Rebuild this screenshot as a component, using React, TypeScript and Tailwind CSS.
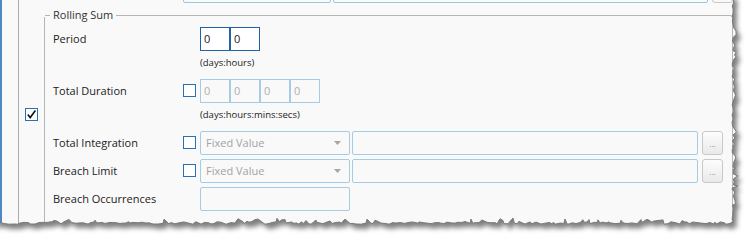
import React from "react";

function mulberry32(a: number) {
  return function () {
    a |= 0;
    a = (a + 0x6d2b79f5) | 0;
    let t = Math.imul(a ^ (a >>> 15), 1 | a);
    t = (t + Math.imul(t ^ (t >>> 7), 61 | t)) ^ t;
    return ((t ^ (t >>> 14)) >>> 0) / 4294967296;
  };
}

function tornPath(): string {
  const r = mulberry32(11);
  const pts: [number, number][] = [];
  pts.push([-6, -6]);
  pts.push([733, -6]);
  for (let y = 0; y <= 221; y += 1 + Math.floor(r() * 4)) {
    let x = 733 + (r() - 0.4) * 2.5;
    if (r() < 0.15) x += 1.5 + r() * 2.5;
    pts.push([x, y]);
  }
  pts.push([734, 222]);
  for (let x = 732; x >= -6; x -= 1 + Math.floor(r() * 5)) {
    let y = 223 + (r() - 0.5) * 2.5;
    if (r() < 0.15) y -= 1.5 + r() * 2.5;
    pts.push([x, y]);
  }
  pts.push([-6, 223]);
  return "M" + pts.map(([x, y]) => `${x.toFixed(1)} ${y.toFixed(1)}`).join(" L") + " Z";
}

const P = tornPath();

function CheckBox({ checked = false }: { checked?: boolean }) {
  return (
    <div className="w-[13px] h-[13px] border border-[#2a70b8] bg-white flex items-center justify-center">
      {checked && (
        <svg width="11" height="11" viewBox="0 0 11 11">
          <path d="M1.8 5.6 L4.2 8.6 L9.4 1.6" fill="none" stroke="#111" strokeWidth="1.6" />
        </svg>
      )}
    </div>
  );
}

function Box({ active = false }: { active?: boolean }) {
  return (
    <div
      className={
        "w-[30px] h-[24px] border flex items-center pl-[3px] pt-[1px] text-[11px] " +
        (active ? "border-[#1f63a6] text-[#1a1a1a] bg-white" : "border-[#a6cbe4] text-[#b0b0b0]")
      }
    >
      0
    </div>
  );
}

function Dropdown() {
  return (
    <div className="w-[150px] h-[24px] border border-[#a6cbe4] rounded-[2px] flex items-center justify-between pl-[5px] pr-[8px] pt-[1px] text-[11px] text-[#a3a3a3]">
      <span>Fixed Value</span>
      <svg width="7" height="4" viewBox="0 0 7 4">
        <path d="M0 0 H7 L3.5 4 Z" fill="#a6a6a6" />
      </svg>
    </div>
  );
}

function DotsButton() {
  return (
    <div className="w-[21px] h-[24px] border border-[#c8c8c8] rounded-[3px] bg-gradient-to-b from-[#fdfdfd] to-[#e9e9e9] flex items-center justify-center text-[8px] text-[#888] leading-none pt-[3px]">
      ...
    </div>
  );
}

function Label({ children }: { children: React.ReactNode }) {
  return <div className="w-[130px] pt-[2px] text-[11px] text-[#222]">{children}</div>;
}

export default function App() {
  return (
    <div className="relative w-[754px] h-[244px] bg-white overflow-hidden font-['Open_Sans',sans-serif]">
      <div className="flex w-[740px] h-[230px] bg-[#f9f9f9]">
        <div className="w-[2px] bg-[#5288c2]" />
        <div className="w-[16px]" />
        <div className="w-px bg-[#ababab]" />
        <div className="w-[25px] pl-[6px] pt-[108px]">
          <CheckBox checked />
        </div>
        <div className="w-px bg-[#b5b5b5] mt-[17px]" />
        <div className="flex flex-col">
          <div className="flex h-[24px] -mt-[21px] -ml-[1px] pl-[139px]">
            <div className="w-[148px] border border-[#9fc5e0] rounded-[2px]" />
            <div className="w-[375px] ml-[2px] border border-[#9fc5e0] rounded-[2px]" />
            <div className="w-[21px] ml-[4px] border border-[#c8c8c8] rounded-[3px]" />
          </div>
          <div className="relative mt-[12px] w-[688px] h-[220px] border-t border-r border-[#b5b5b5] rounded-tr-[3px] pl-[8px]">
            <div className="absolute -top-[9px] left-[5px] px-[3px] bg-[#f9f9f9] text-[11px] leading-[16px] text-[#333]">
              Rolling Sum
            </div>
            <div className="flex flex-col">
              <div className="flex items-center h-[24px] mt-[11px]">
                <Label>Period</Label>
                <div className="w-[17px]" />
                <Box active />
                <Box active />
              </div>
              <div className="h-[18px] mt-[2px] pl-[147px] pt-[4px] flex items-center text-[9.5px] text-[#222]">(days:hours)</div>
              <div className="flex items-center h-[24px] mt-[8px]">
                <Label>Total Duration</Label>
                <div className="w-[17px]">
                  <CheckBox />
                </div>
                <Box />
                <Box />
                <Box />
                <Box />
              </div>
              <div className="h-[18px] mt-[2px] pl-[147px] pt-[4px] flex items-center text-[9.5px] text-[#222]">
                (days:hours:mins:secs)
              </div>
              <div className="flex items-center h-[24px] mt-[8px]">
                <Label>Total Integration</Label>
                <div className="w-[17px]">
                  <CheckBox />
                </div>
                <Dropdown />
                <div className="w-[346px] h-[24px] ml-[2px] border border-[#a6cbe4] rounded-[2px]" />
                <div className="ml-[4px]">
                  <DotsButton />
                </div>
              </div>
              <div className="flex items-center h-[24px] mt-[4px]">
                <Label>Breach Limit</Label>
                <div className="w-[17px]">
                  <CheckBox />
                </div>
                <Dropdown />
                <div className="w-[346px] h-[24px] ml-[2px] border border-[#a6cbe4] rounded-[2px]" />
                <div className="ml-[4px]">
                  <DotsButton />
                </div>
              </div>
              <div className="flex items-center h-[24px] mt-[4px]">
                <Label>Breach Occurrences</Label>
                <div className="w-[17px]" />
                <div className="w-[150px] h-[24px] border border-[#a6cbe4] rounded-[2px]" />
              </div>
            </div>
          </div>
        </div>
      </div>
      <svg className="absolute inset-0" width="754" height="244">
        <defs>
          <filter id="blur" x="-10%" y="-10%" width="120%" height="130%">
            <feGaussianBlur stdDeviation="2.5" />
          </filter>
          <mask id="outside">
            <rect x="0" y="0" width="754" height="244" fill="white" />
            <path d={P} fill="black" />
          </mask>
        </defs>
        <path d={`M-10 -10 H764 V254 H-10 Z ${P}`} fill="#fff" fillRule="evenodd" />
        <g mask="url(#outside)">
          <path d={P} transform="translate(4 5)" fill="#000" opacity="0.5" filter="url(#blur)" />
        </g>
        <path d={P} fill="none" stroke="#7a7a7a" strokeWidth="1" />
      </svg>
    </div>
  );
}
